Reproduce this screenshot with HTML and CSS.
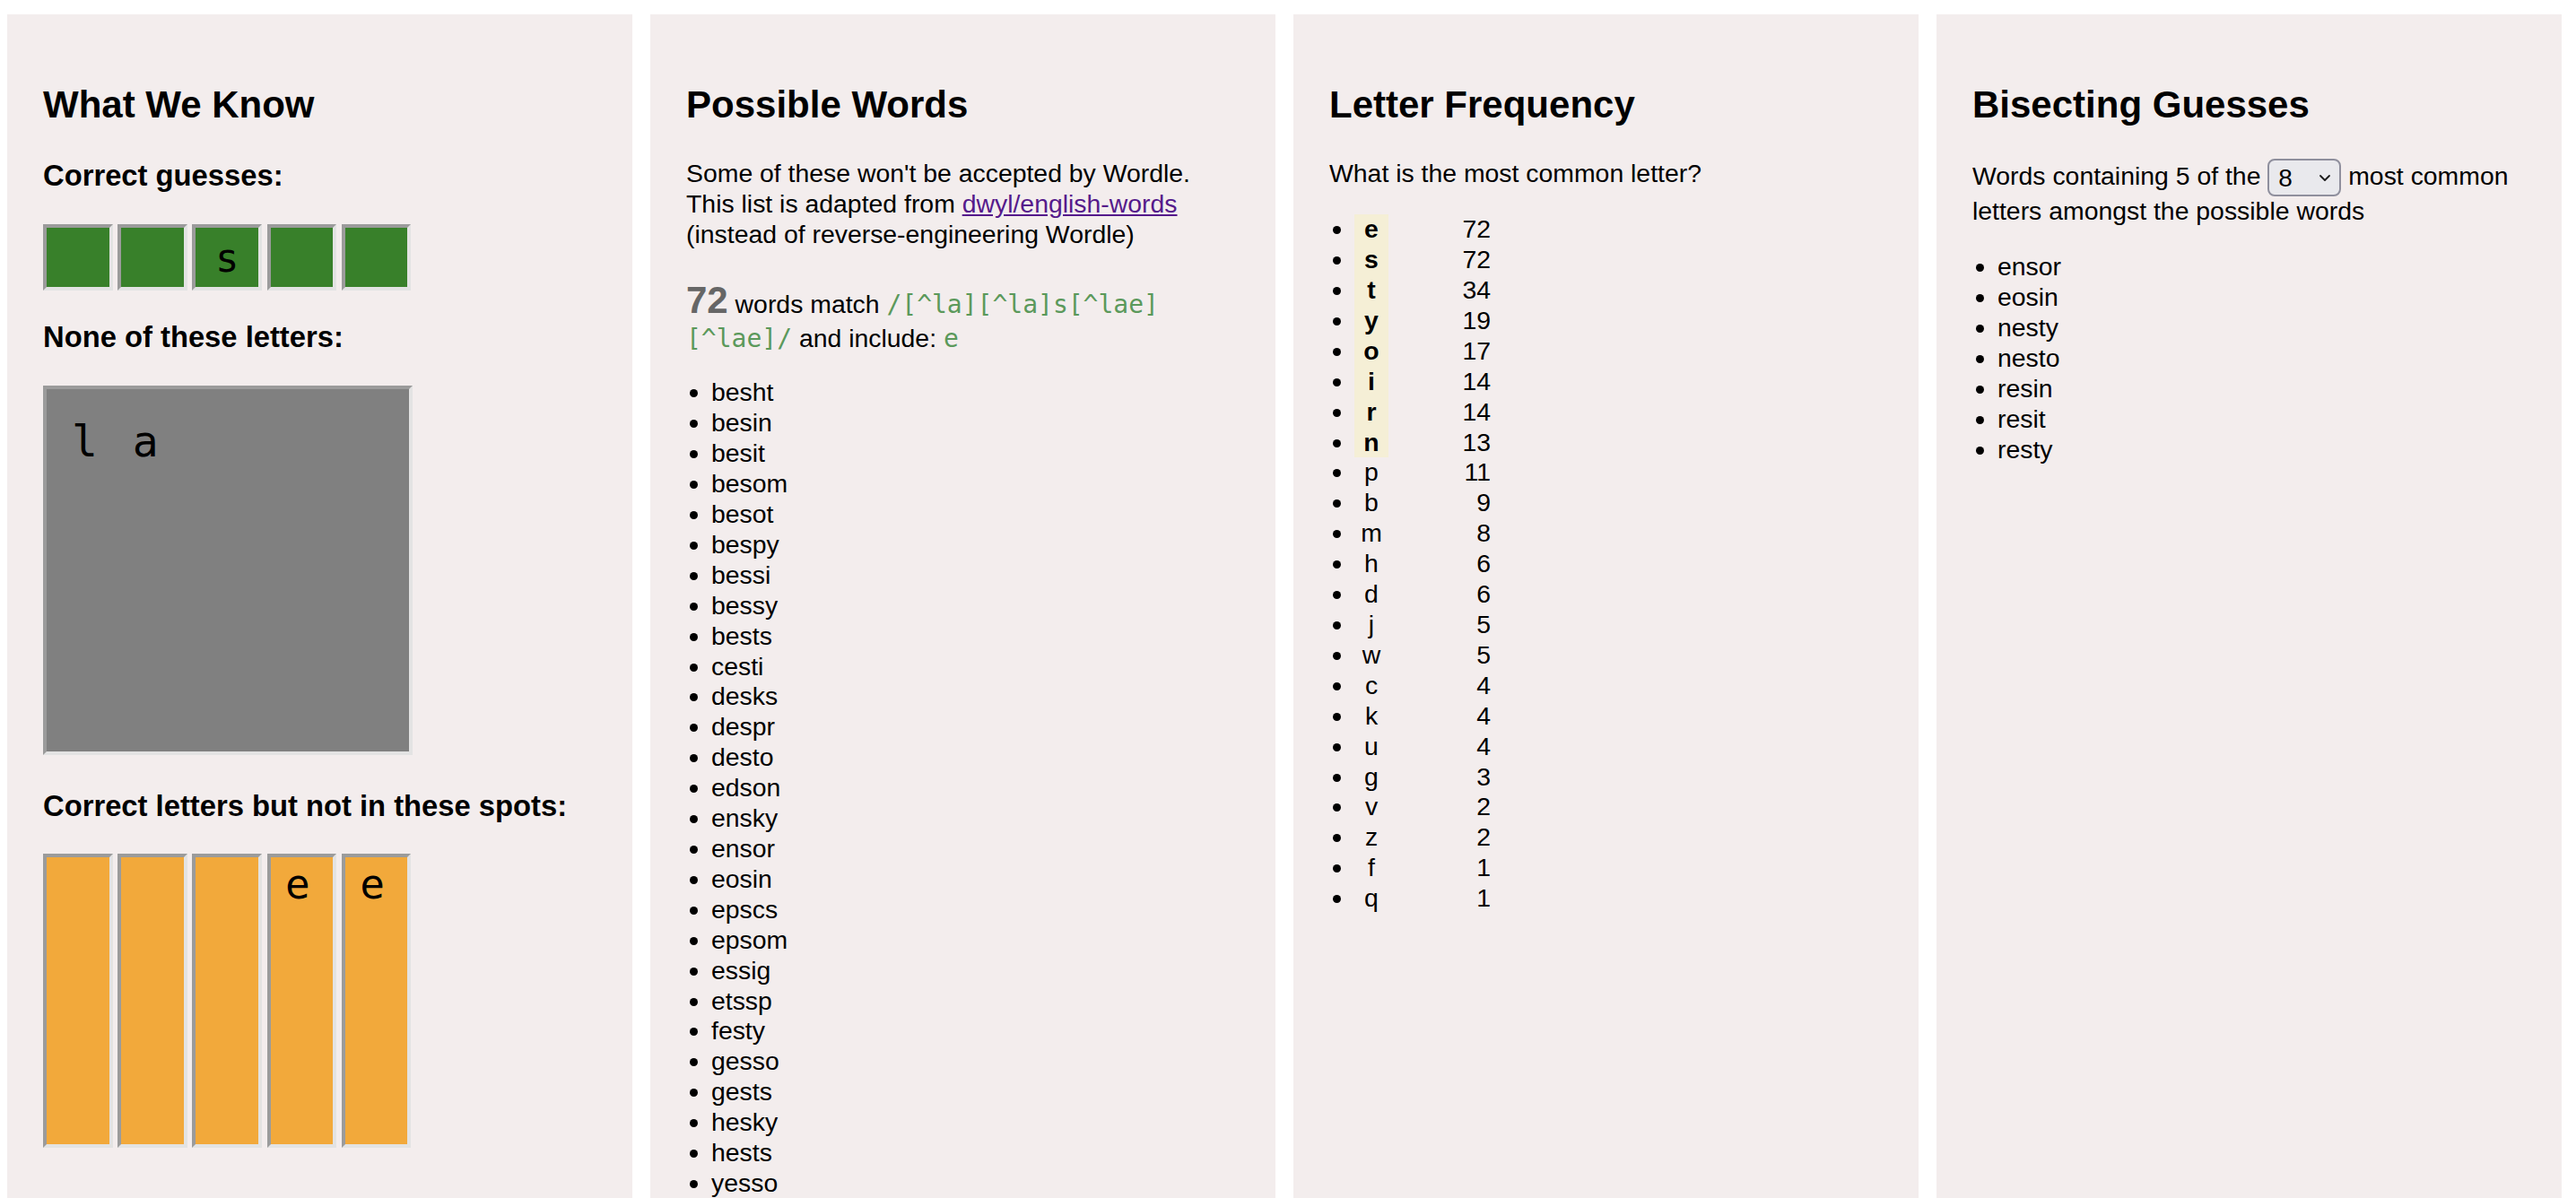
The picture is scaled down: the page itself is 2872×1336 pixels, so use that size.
FILE: index.html
```html
<!DOCTYPE html>
<html lang="en">
<head>
<meta charset="utf-8">
<title>Wordle Helper</title>
<link rel="stylesheet" href="styles.css">
</head>
<body>
<main class="board">
  <section class="panel">
    <h2>What We Know</h2>
    <h3>Correct guesses:</h3>
    <div class="tiles tiles-green">
      <div class="tile tile-green"></div>
      <div class="tile tile-green"></div>
      <div class="tile tile-green">s</div>
      <div class="tile tile-green"></div>
      <div class="tile tile-green"></div>
    </div>
    <h3>None of these letters:</h3>
    <div class="excluded">l a</div>
    <h3>Correct letters but not in these spots:</h3>
    <div class="tiles">
      <div class="tile tile-orange"></div>
      <div class="tile tile-orange"></div>
      <div class="tile tile-orange"></div>
      <div class="tile tile-orange">e</div>
      <div class="tile tile-orange">e</div>
    </div>
  </section>

  <section class="panel">
    <h2>Possible Words</h2>
    <p class="note">Some of these won't be accepted by Wordle.<br>This list is adapted from <a class="link" href="#">dwyl/english-words</a><br>(instead of reverse-engineering Wordle)</p>
    <p class="match"><span class="count">72</span> words match <code class="rx">/[^la]</code><wbr><code class="rx">[^la]</code><wbr><code class="rx">s</code><wbr><code class="rx">[^lae]</code><wbr><code class="rx">[^lae]/</code> and include: <code class="rx">e</code></p>
    <ul class="list list-words">
      <li>besht</li><li>besin</li><li>besit</li><li>besom</li><li>besot</li><li>bespy</li><li>bessi</li><li>bessy</li><li>bests</li><li>cesti</li><li>desks</li><li>despr</li><li>desto</li><li>edson</li><li>ensky</li><li>ensor</li><li>eosin</li><li>epscs</li><li>epsom</li><li>essig</li><li>etssp</li><li>festy</li><li>gesso</li><li>gests</li><li>hesky</li><li>hests</li><li>yesso</li>
      <li>jesus</li><li>jests</li><li>kests</li><li>messy</li><li>mesic</li><li>mesto</li><li>mesty</li><li>nesty</li><li>nesto</li><li>nests</li><li>pesky</li><li>pesos</li><li>pests</li><li>pesto</li><li>pesty</li><li>resin</li><li>resit</li><li>resod</li><li>resow</li><li>rests</li><li>resty</li><li>resun</li><li>sesti</li><li>tests</li><li>testy</li><li>vests</li><li>vesty</li><li>wests</li><li>westy</li><li>yests</li><li>yesty</li><li>zests</li><li>zesty</li><li>hesps</li><li>desis</li><li>jessy</li><li>nesso</li><li>fests</li><li>mesom</li><li>resup</li><li>tesky</li><li>wesky</li><li>yesky</li><li>jesso</li>
    </ul>
  </section>

  <section class="panel">
    <h2>Letter Frequency</h2>
    <p class="note">What is the most common letter?</p>
    <ul class="list freq">
      <li><span class="fl hot">e</span><span class="fc">72</span></li>
      <li><span class="fl hot">s</span><span class="fc">72</span></li>
      <li><span class="fl hot">t</span><span class="fc">34</span></li>
      <li><span class="fl hot">y</span><span class="fc">19</span></li>
      <li><span class="fl hot">o</span><span class="fc">17</span></li>
      <li><span class="fl hot">i</span><span class="fc">14</span></li>
      <li><span class="fl hot">r</span><span class="fc">14</span></li>
      <li><span class="fl hot">n</span><span class="fc">13</span></li>
      <li><span class="fl">p</span><span class="fc">11</span></li>
      <li><span class="fl">b</span><span class="fc">9</span></li>
      <li><span class="fl">m</span><span class="fc">8</span></li>
      <li><span class="fl">h</span><span class="fc">6</span></li>
      <li><span class="fl">d</span><span class="fc">6</span></li>
      <li><span class="fl">j</span><span class="fc">5</span></li>
      <li><span class="fl">w</span><span class="fc">5</span></li>
      <li><span class="fl">c</span><span class="fc">4</span></li>
      <li><span class="fl">k</span><span class="fc">4</span></li>
      <li><span class="fl">u</span><span class="fc">4</span></li>
      <li><span class="fl">g</span><span class="fc">3</span></li>
      <li><span class="fl">v</span><span class="fc">2</span></li>
      <li><span class="fl">z</span><span class="fc">2</span></li>
      <li><span class="fl">f</span><span class="fc">1</span></li>
      <li><span class="fl">q</span><span class="fc">1</span></li>
    </ul>
  </section>

  <section class="panel">
    <h2>Bisecting Guesses</h2>
    <p class="note note-bisect">Words containing 5 of the <span class="pick"><select class="pick-select" aria-label="number of letters"><option>8</option></select><svg class="pick-caret" width="14" height="9" viewBox="0 0 14 9"><path d="M2 2 L7 7 L12 2" fill="none" stroke="#1a1a1a" stroke-width="1.8" stroke-linecap="round" stroke-linejoin="round"/></svg></span> most common letters amongst the possible words</p>
    <ul class="list">
      <li>ensor</li><li>eosin</li><li>nesty</li><li>nesto</li><li>resin</li><li>resit</li><li>resty</li>
    </ul>
  </section>
</main>
</body>
</html>
```

FILE: styles.css
```css
html, body {
  margin: 0;
  background: #ffffff;
}

body {
  font-family: "Liberation Sans", Arial, Helvetica, sans-serif;
  font-size: 28.4px;
  line-height: 33.9px;
  color: #000000;
}

.board {
  display: grid;
  grid-template-columns: repeat(4, 697px);
  column-gap: 20px;
  padding: 16px 16px 0 8px;
  align-items: stretch;
}

.panel {
  background: #f3eded;
  padding: 40px 40px 40px 40px;
}

h2 {
  font-size: 42px;
  line-height: 48.3px;
  font-weight: bold;
  margin: 37px 0 36px;
}

h3 {
  font-size: 32.76px;
  line-height: 37.7px;
  font-weight: bold;
  margin: 0 0 35px;
}

.tiles {
  display: flex;
  gap: 5.6px;
}

.tiles-green {
  margin-bottom: 33px;
}

.tile {
  box-sizing: border-box;
  width: 77.6px;
  border: 4px solid;
  border-color: #9b9b9b #e3e3e3 #e3e3e3 #9b9b9b;
  font-family: "DejaVu Sans Mono", "Liberation Mono", monospace;
  color: #000000;
}

.tile-green {
  height: 74px;
  background: #38802a;
  font-size: 44px;
  line-height: 51px;
  display: flex;
  align-items: center;
  justify-content: center;
}

.tile-orange {
  height: 328px;
  background: #f2a93b;
  font-size: 46px;
  line-height: 53.5px;
  padding: 4px 9px 0 0;
  text-align: center;
}

.excluded {
  box-sizing: border-box;
  width: 412px;
  height: 412px;
  margin-bottom: 38px;
  padding: 30px 28px;
  background: #808080;
  border: 4px solid;
  border-color: #9b9b9b #e3e3e3 #e3e3e3 #9b9b9b;
  font-family: "DejaVu Sans Mono", "Liberation Mono", monospace;
  font-size: 48px;
  line-height: 56px;
  letter-spacing: 5px;
  white-space: pre;
}

p {
  margin: 0;
}

.match {
  margin-top: 38px;
  line-height: 36.7px;
}

.count {
  font-size: 42px;
  font-weight: bold;
  color: #666666;
}

.rx {
  font-family: "DejaVu Sans Mono", "Liberation Mono", monospace;
  font-size: 28px;
  color: #5b995b;
}

.link {
  color: #551a8b;
  text-decoration: underline;
}

.list {
  margin: 28px 0;
  padding-left: 28px;
}

.list-words {
  margin-top: 25px;
}

.note-bisect {
  margin-top: 4px;
}

.fl {
  display: inline-block;
  width: 38px;
  text-align: center;
}

.fl.hot {
  background: #f5efd6;
  font-weight: bold;
}

.fc {
  display: inline-block;
  width: 114px;
  text-align: right;
}

.pick {
  position: relative;
  display: inline-block;
  vertical-align: middle;
  width: 82px;
  height: 42px;
}

.pick-select {
  -webkit-appearance: none;
  appearance: none;
  display: block;
  box-sizing: border-box;
  width: 82px;
  height: 42px;
  margin: 0;
  padding: 0 0 0 10px;
  border: 2px solid #8f8f9d;
  border-radius: 8px;
  background: #e9e9ed;
  font-family: "Liberation Sans", Arial, sans-serif;
  font-size: 28px;
  color: #000000;
}

.pick-caret {
  position: absolute;
  right: 11px;
  top: 17px;
  pointer-events: none;
}
```
